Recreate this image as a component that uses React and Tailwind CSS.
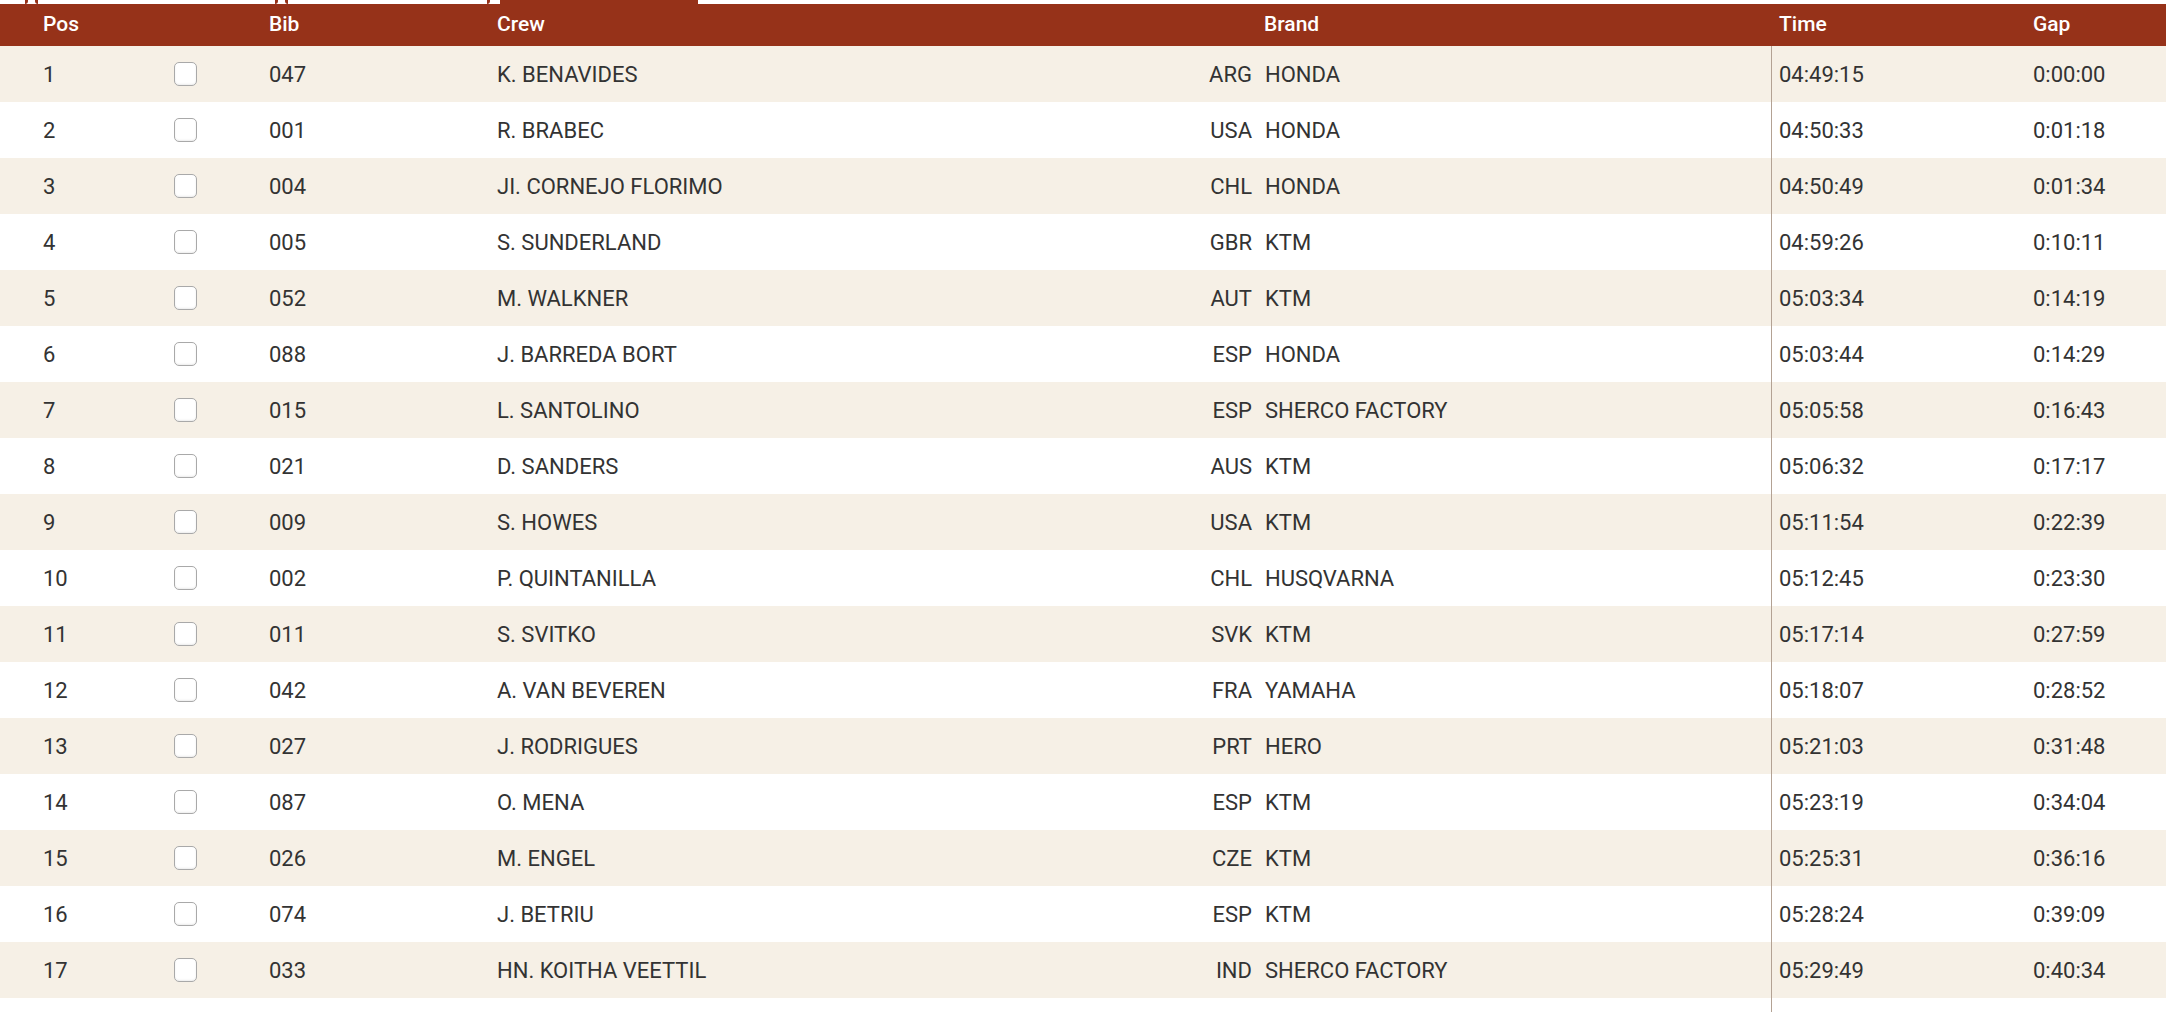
const rows = [
  ['1', '047', 'K. BENAVIDES', 'ARG', 'HONDA', '04:49:15', '0:00:00'],
  ['2', '001', 'R. BRABEC', 'USA', 'HONDA', '04:50:33', '0:01:18'],
  ['3', '004', 'JI. CORNEJO FLORIMO', 'CHL', 'HONDA', '04:50:49', '0:01:34'],
  ['4', '005', 'S. SUNDERLAND', 'GBR', 'KTM', '04:59:26', '0:10:11'],
  ['5', '052', 'M. WALKNER', 'AUT', 'KTM', '05:03:34', '0:14:19'],
  ['6', '088', 'J. BARREDA BORT', 'ESP', 'HONDA', '05:03:44', '0:14:29'],
  ['7', '015', 'L. SANTOLINO', 'ESP', 'SHERCO FACTORY', '05:05:58', '0:16:43'],
  ['8', '021', 'D. SANDERS', 'AUS', 'KTM', '05:06:32', '0:17:17'],
  ['9', '009', 'S. HOWES', 'USA', 'KTM', '05:11:54', '0:22:39'],
  ['10', '002', 'P. QUINTANILLA', 'CHL', 'HUSQVARNA', '05:12:45', '0:23:30'],
  ['11', '011', 'S. SVITKO', 'SVK', 'KTM', '05:17:14', '0:27:59'],
  ['12', '042', 'A. VAN BEVEREN', 'FRA', 'YAMAHA', '05:18:07', '0:28:52'],
  ['13', '027', 'J. RODRIGUES', 'PRT', 'HERO', '05:21:03', '0:31:48'],
  ['14', '087', 'O. MENA', 'ESP', 'KTM', '05:23:19', '0:34:04'],
  ['15', '026', 'M. ENGEL', 'CZE', 'KTM', '05:25:31', '0:36:16'],
  ['16', '074', 'J. BETRIU', 'ESP', 'KTM', '05:28:24', '0:39:09'],
  ['17', '033', 'HN. KOITHA VEETTIL', 'IND', 'SHERCO FACTORY', '05:29:49', '0:40:34'],
]

function Checkbox() {
  return (
    <span className="block w-[23px] h-[24px] rounded-[5px] border border-[#a9a9a9] bg-white shadow-[inset_0_-1px_2px_rgba(0,0,0,0.08)]" />
  )
}

export default function App() {
  return (
    <div className="min-h-[1012px] flex flex-col bg-white text-[#333] text-[22px] font-['Roboto',sans-serif]">
      {/* bottom edges of the tabs above */}
      <div className="h-[4px] flex">
        <div className="w-[25px]" />
        <div className="w-[3px] border-r-[3px] border-[#963219] rounded-br-[3px]" />
        <div className="w-[7px]" />
        <div className="w-[243px] border-l-[3px] border-r-[3px] border-[#963219] rounded-b-[3px]" />
        <div className="w-[7px]" />
        <div className="w-[205px] border-l-[3px] border-r-[3px] border-[#963219] rounded-b-[3px]" />
        <div className="w-[10px]" />
        <div className="w-[198px] bg-[#963219]" />
      </div>

      <div className="h-[42px] flex items-center bg-[#963219] text-white font-medium text-[21px]">
        <div className="w-[269px] pl-[43px]">Pos</div>
        <div className="w-[228px]">Bib</div>
        <div className="w-[767px]">Crew</div>
        <div className="w-[515px]">Brand</div>
        <div className="w-[254px]">Time</div>
        <div className="flex-1">Gap</div>
      </div>

      {rows.map((r, i) => (
        <div key={r[0]} className={`h-[56px] flex items-center ${i % 2 === 0 ? 'bg-[#f6f0e6]' : 'bg-white'}`}>
          <div className="w-[174px] pl-[43px]">{r[0]}</div>
          <div className="w-[95px]"><Checkbox /></div>
          <div className="w-[228px]">{r[1]}</div>
          <div className="w-[700px]">{r[2]}</div>
          <div className="w-[55px] text-right">{r[3]}</div>
          <div className="w-[519px] pl-[13px]">{r[4]}</div>
          <div className="w-[262px] h-full flex items-center pl-[7px] border-l border-[#b3a294]">{r[5]}</div>
          <div className="flex-1">{r[6]}</div>
        </div>
      ))}

      <div className="flex-1 flex">
        <div className="w-[1771px]" />
        <div className="border-l border-[#b3a294]" />
      </div>
    </div>
  )
}
